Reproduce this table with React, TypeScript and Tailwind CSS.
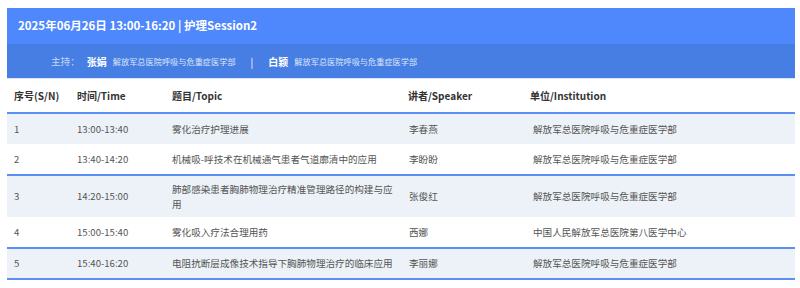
import React from "react";

const rows = [
  { n: "1", t: "13:00-13:40", topic: "雾化治疗护理进展", sp: "李春燕", ins: "解放军总医院呼吸与危重症医学部", bg: "bg-[#ecf2f7]", line: false },
  { n: "2", t: "13:40-14:20", topic: "机械吸-呼技术在机械通气患者气道廓清中的应用", sp: "李盼盼", ins: "解放军总医院呼吸与危重症医学部", bg: "bg-white", line: true },
  { n: "3", t: "14:20-15:00", topic: "肺部感染患者胸肺物理治疗精准管理路径的构建与应用", sp: "张俊红", ins: "解放军总医院呼吸与危重症医学部", bg: "bg-[#ecf2f7]", line: false },
  { n: "4", t: "15:00-15:40", topic: "雾化吸入疗法合理用药", sp: "西娜", ins: "中国人民解放军总医院第八医学中心", bg: "bg-white", line: true },
  { n: "5", t: "15:40-16:20", topic: "电阻抗断层成像技术指导下胸肺物理治疗的临床应用", sp: "李丽娜", ins: "解放军总医院呼吸与危重症医学部", bg: "bg-[#ecf2f7]", line: true },
];

export default function App() {
  return (
    <div
      className="w-[800px] h-[288px] bg-white pt-[8px] pl-[7px] overflow-hidden"
      style={{ fontFamily: '"Noto Sans CJK SC", "Noto Sans", sans-serif' }}
    >
      <div className="w-[788px]">
        <div className="h-[36px] bg-[#4f88fd] flex items-center pl-[11px]">
          <span className="text-white font-bold text-[11.5px] leading-none">
            2025年06月26日 13:00-16:20 | 护理Session2
          </span>
        </div>
        <div className="h-[35px] bg-[#477ee3] flex items-center pl-[44px] border-b border-[#d9e6fb]">
          <span className="text-[#c5d6f6] text-[9.6px]">主持：</span>
          <span className="text-white font-bold text-[10px] ml-[7px]">张娟</span>
          <span className="text-[#dbe6fa] text-[8.2px] ml-[6px]">解放军总医院呼吸与危重症医学部</span>
          <span className="text-white text-[10px] ml-[15px]">|</span>
          <span className="text-white font-bold text-[10px] ml-[15px]">白颖</span>
          <span className="text-[#dbe6fa] text-[8.2px] ml-[6px]">解放军总医院呼吸与危重症医学部</span>
        </div>
        <table className="w-[788px] border-collapse table-fixed">
          <colgroup>
            <col className="w-[63px]" />
            <col className="w-[95px]" />
            <col className="w-[236px]" />
            <col className="w-[122px]" />
            <col className="w-[272px]" />
          </colgroup>
          <thead>
            <tr className="border-b-2 border-[#5b8ff3]">
              {["序号(S/N)", "时间/Time", "题目/Topic", "讲者/Speaker", "单位/Institution"].map((h) => (
                <th key={h} className="h-[34px] pl-[7px] text-left align-middle text-[10px] font-bold text-[#333]">
                  {h}
                </th>
              ))}
            </tr>
          </thead>
          <tbody>
            {rows.map((r) => (
              <tr key={r.n} className={`${r.bg} ${r.line ? "border-b-2 border-[#5b8ff3]" : ""}`}>
                <td className="h-[31px] py-[6px] pl-[7px] text-[9.6px] leading-[14.5px] text-[#555] align-middle">{r.n}</td>
                <td className="py-[6px] pl-[7px] text-[9.6px] leading-[14.5px] text-[#555] align-middle">{r.t}</td>
                <td className="py-[6px] pl-[7px] pr-[8px] text-[9.6px] leading-[14.5px] text-[#555] align-middle">{r.topic}</td>
                <td className="py-[6px] pl-[8px] text-[9.6px] leading-[14.5px] text-[#555] align-middle">{r.sp}</td>
                <td className="py-[6px] pl-[10px] text-[9.6px] leading-[14.5px] text-[#555] align-middle">{r.ins}</td>
              </tr>
            ))}
          </tbody>
        </table>
      </div>
    </div>
  );
}
